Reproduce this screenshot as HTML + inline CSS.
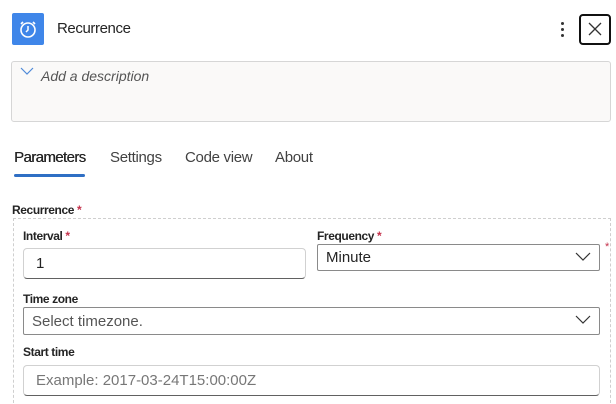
<!DOCTYPE html>
<html style="width:616px;height:404px;overflow:hidden"><head><style>
*{box-sizing:border-box;margin:0;padding:0}
body{width:616px;height:404px;overflow:hidden;background:#fff;font-family:"Liberation Sans",sans-serif;color:#242424;position:relative}
.a{position:absolute}
.lbl{font-size:12px;font-weight:bold;color:#242424;letter-spacing:-0.4px}
.req{color:#c4314b}
.inp{border:1px solid #d1d1d1;border-bottom-color:#616161;border-radius:4px;background:#fff;font-size:15px;padding-left:12px;display:flex;align-items:center}
.sel{border:1px solid #8a8a8a;border-radius:2px;background:#fff;font-size:15px;padding-left:8px;display:flex;align-items:center}
.tab{font-size:15px;color:#424242;letter-spacing:-0.3px}
</style></head><body>
<div class="a" style="left:12px;top:13px;width:32px;height:32px;background:#3f86e9;border-radius:2px">
<svg width="32" height="32" viewBox="0 0 32 32"><circle cx="16" cy="17" r="7" fill="none" stroke="#fff" stroke-width="1.6"/><path d="M16 13v4l-2 2" stroke="#fff" stroke-width="1.5" fill="none"/><path d="M9 11l2-2M23 11l-2-2" stroke="#fff" stroke-width="1.6"/></svg></div>
<div class="a" style="left:57px;top:20px;font-size:15px;letter-spacing:-0.4px">Recurrence</div>
<div class="a" style="left:561px;top:22px;width:3px;height:3px;background:#333;border-radius:2px"></div>
<div class="a" style="left:561px;top:28px;width:3px;height:3px;background:#333;border-radius:2px"></div>
<div class="a" style="left:561px;top:34px;width:3px;height:3px;background:#333;border-radius:2px"></div>
<div class="a" style="left:579px;top:14px;width:32px;height:31px;border:2px solid #111;border-radius:4px">
<svg width="28" height="27" viewBox="0 0 28 27"><path d="M8 7l12 12M20 7L8 19" stroke="#333" stroke-width="1.3"/></svg></div>
<div class="a" style="left:11px;top:61px;width:600px;height:61px;background:#faf9f8;border:1px solid #d6d6d6;border-radius:3px"></div>
<svg class="a" style="left:20px;top:67px" width="14" height="9"><path d="M1 1l6 6 6-6" stroke="#4f8ad8" stroke-width="1.2" fill="none"/></svg>
<div class="a" style="left:41px;top:68px;font-size:14px;font-style:italic;color:#555">Add a description</div>
<div class="a tab" style="left:14px;top:149px;color:#242424;letter-spacing:-0.6px;text-shadow:0.3px 0 0 #242424">Parameters</div>
<div class="a tab" style="left:110px;top:149px">Settings</div>
<div class="a tab" style="left:185px;top:149px">Code view</div>
<div class="a tab" style="left:275px;top:149px">About</div>
<div class="a" style="left:14px;top:174px;width:71px;height:3px;background:#2f6fc4;border-radius:2px"></div>
<div class="a lbl" style="left:12px;top:203px">Recurrence <span class="req">*</span></div>
<div class="a" style="left:13px;top:218px;width:598px;height:190px;border:1px dashed #cfcfcf"></div>
<div class="a lbl" style="left:23px;top:229px">Interval <span class="req">*</span></div>
<div class="a inp" style="left:23px;top:248px;width:283px;height:31px">1</div>
<div class="a lbl" style="left:317px;top:229px">Frequency <span class="req">*</span></div>
<div class="a sel" style="left:317px;top:244px;width:283px;height:27px">Minute</div>
<div class="a req" style="left:605px;top:241px;font-size:11px">*</div>
<div class="a lbl" style="left:23px;top:292px">Time zone</div>
<div class="a sel" style="left:23px;top:307px;width:577px;height:28px;color:#555">Select timezone.</div>
<div class="a lbl" style="left:23px;top:345px">Start time</div>
<div class="a inp" style="left:23px;top:365px;width:577px;height:31px;color:#777">Example: 2017-03-24T15:00:00Z</div>
<svg class="a" style="left:575px;top:252px" width="16" height="10"><path d="M1 1l7 7 7-7" stroke="#333" stroke-width="1.2" fill="none"/></svg>
<svg class="a" style="left:575px;top:315px" width="16" height="10"><path d="M1 1l7 7 7-7" stroke="#333" stroke-width="1.2" fill="none"/></svg>
</body></html>
